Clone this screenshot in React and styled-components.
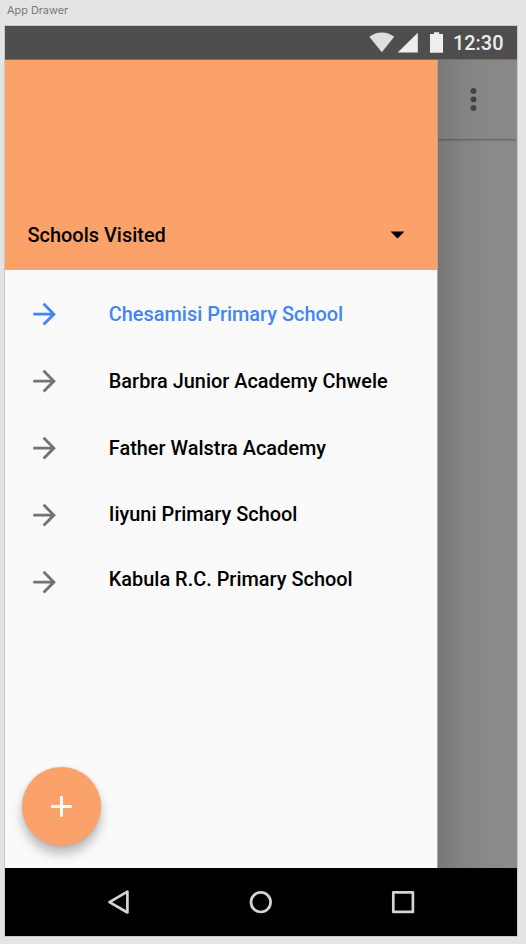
import React from "react";
import styled, { createGlobalStyle } from "styled-components";

const GlobalStyle = createGlobalStyle`
  * { box-sizing: border-box; }
  body {
    margin: 0;
    background: #e4e4e4;
    font-family: Roboto, sans-serif;
    -webkit-font-smoothing: antialiased;
  }
`;

const Artboard = styled.main`
  width: 526px;
  height: 944px;
  padding: 0 9px 0 5px;
  overflow: hidden;
`;

const ArtboardLabel = styled.div`
  height: 26px;
  padding: 4px 0 0 2px;
  font: 400 10.9px/13px Inter, sans-serif;
  color: #777;
`;

const Phone = styled.section`
  width: 512px;
  height: 910px;
  display: flex;
  flex-direction: column;
  box-shadow: 0 0 0 1px #c9c9c9;
`;

const StatusBar = styled.header`
  flex: 0 0 34px;
  display: flex;
  justify-content: flex-end;
  align-items: flex-start;
  padding-right: 13px;
  background: #4e4e4e;
  border-bottom: 1px solid #7d6a5e;
`;

const StatusIcons = styled.svg`
  display: block;
  width: 75px;
  height: 33px;
`;

const Clock = styled.time`
  width: 51px;
  margin: 6px 0 0 9px;
  font-size: 19.9px;
  line-height: 24px;
  font-weight: 500;
  color: #eee;
  white-space: nowrap;
`;

const Body = styled.div`
  flex: 1;
  display: flex;
  min-height: 0;
`;

const Drawer = styled.aside`
  flex: 0 0 432px;
  display: flex;
  flex-direction: column;
  background: #fafafa;
`;

const DrawerHeader = styled.div`
  flex: 0 0 210px;
  display: flex;
  align-items: flex-end;
  justify-content: space-between;
  padding: 0 32px 23px 22.5px;
  background: #fba26a;
`;

const Title = styled.h1`
  margin: 0;
  font-size: 19.95px;
  line-height: 24px;
  font-weight: 500;
  color: #000;
`;

const Caret = styled.svg`
  display: block;
  width: 16px;
  height: 24px;
`;

const SchoolList = styled.ul`
  margin: 0;
  padding: 11px 0 0 23px;
  list-style: none;
`;

const SchoolRow = styled.li`
  height: 67px;
  display: flex;
  align-items: center;
  color: ${({ $active }) => ($active ? "#4285f4" : "#000")};
`;

const ArrowIcon = styled.svg`
  flex: none;
  width: 34px;
  height: 34px;
  margin: 0 46.8px 1px 0;
  fill: ${({ $active }) => ($active ? "#4285f4" : "#737373")};
`;

const SchoolName = styled.span`
  font-size: 19.91px;
  line-height: 24px;
  font-weight: 500;
  white-space: nowrap;
  padding-bottom: ${({ $lift }) => $lift}px;
`;

const AddButton = styled.button`
  width: 79.4px;
  height: 79.4px;
  margin: auto 0 22px 17px;
  padding: 0;
  border: 0;
  border-radius: 50%;
  display: grid;
  place-items: center;
  background: #fba26a;
  box-shadow: 0 8px 11px rgba(0, 0, 0, 0.26), 0 0 3px rgba(0, 0, 0, 0.12);
`;

const PlusIcon = styled.svg`
  display: block;
  width: 35px;
  height: 35px;
`;

const Scrim = styled.div`
  flex: 1;
  border-left: 1px solid #aea49d;
  background: linear-gradient(90deg, #777 0, #7d7d7d 12px, #848484 26px, #898989 46px, #8b8b8b 100%);
`;

const AppBar = styled.div`
  height: 79px;
  padding-left: 23px;
  background: rgba(128, 128, 128, 0.2);
  box-shadow: 0 1px 2px rgba(0, 0, 0, 0.35);
  clip-path: inset(0 0 -5px 0);
`;

const MoreIcon = styled.svg`
  display: block;
  width: 24px;
  height: 79px;
`;

const NavBar = styled.nav`
  flex: 0 0 68px;
  background: #000;
`;

const NavIcons = styled.svg`
  display: block;
  width: 512px;
  height: 68px;
  fill: none;
  stroke: #d4d4d4;
  stroke-width: 2.7;
  stroke-linejoin: round;
`;

const schools = [
  { name: "Chesamisi Primary School", active: true, lift: 0 },
  { name: "Barbra Junior Academy Chwele", lift: 0 },
  { name: "Father Walstra Academy", lift: 0 },
  { name: "Iiyuni Primary School", lift: 2 },
  { name: "Kabula R.C. Primary School", lift: 6 },
];

export default function App() {
  return (
    <>
      <GlobalStyle />
      <Artboard>
        <ArtboardLabel>App Drawer</ArtboardLabel>
        <Phone>
          <StatusBar>
            <StatusIcons viewBox="369 26 75 33">
              <path d="M369.3 36.8C376.5 30.9 387 30.9 394.2 36.8L381.8 52.2Z" fill="#dedede" />
              <path d="M397.7 52.6L417.8 32.7V52.6Z" fill="#eee" />
              <path d="M430 34H434V32.2H439.2V34H443V52.7H430Z" fill="#eee" />
            </StatusIcons>
            <Clock>12:30</Clock>
          </StatusBar>
          <Body>
            <Drawer>
              <DrawerHeader>
                <Title>Schools Visited</Title>
                <Caret viewBox="0 0 16 24">
                  <path d="M1.5 8.5H15.5L8.5 15.5Z" />
                </Caret>
              </DrawerHeader>
              <SchoolList>
                {schools.map(({ name, active, lift }) => (
                  <SchoolRow key={name} $active={active}>
                    <ArrowIcon viewBox="0 0 24 24" $active={active}>
                      <path d="M11.7 4.1l-1.41 1.41L15.87 11.1H3.7v2h12.17l-5.58 5.59L11.7 20.1l8-8z" />
                    </ArrowIcon>
                    <SchoolName $lift={lift}>{name}</SchoolName>
                  </SchoolRow>
                ))}
              </SchoolList>
              <AddButton aria-label="Add school">
                <PlusIcon viewBox="0 0 24 24">
                  <path d="M19 13h-6v6h-2v-6H5v-2h6V5h2v6h6z" fill="#fff" />
                </PlusIcon>
              </AddButton>
            </Drawer>
            <Scrim>
              <AppBar>
                <MoreIcon viewBox="0 0 24 79" fill="#404040">
                  <circle cx="12.5" cy="30.9" r="2.9" />
                  <circle cx="12.5" cy="39.4" r="2.9" />
                  <circle cx="12.5" cy="47.9" r="2.9" />
                </MoreIcon>
              </AppBar>
            </Scrim>
          </Body>
          <NavBar>
            <NavIcons viewBox="5 868 512 68">
              <path d="M109.5 902.2L127.4 891.7V912.5Z" />
              <circle cx="260.8" cy="902.2" r="9.8" />
              <rect x="393.3" y="892.3" width="19.6" height="19.6" />
            </NavIcons>
          </NavBar>
        </Phone>
      </Artboard>
    </>
  );
}
